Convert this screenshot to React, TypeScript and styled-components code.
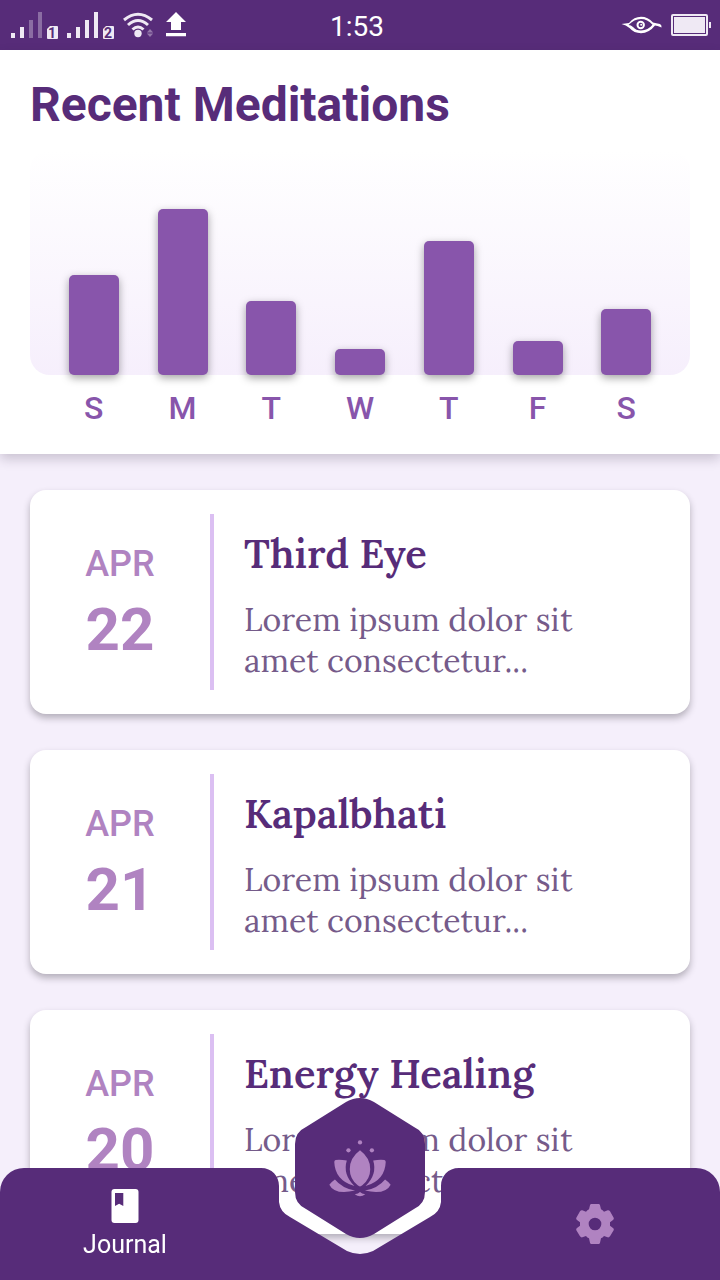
import React from "react";
import styled, { createGlobalStyle } from "styled-components";

const colors = {
  deep: "#572c79",
  bar: "#8855ab",
  orchid: "#b083c1",
  divider: "#dbbff2",
  body: "#755b8a",
  mist: "#f5effb",
};

const sans = `Roboto, "Liberation Sans", sans-serif`;
const serif = `Lora, "Liberation Serif", serif`;

const GlobalStyle = createGlobalStyle`
  *, *::before, *::after { box-sizing: border-box; }
  body { margin: 0; background: ${colors.mist}; font-family: ${sans}; }
  button { font: inherit; border: 0; margin: 0; padding: 0; background: none; cursor: pointer; }
  svg { display: block; }
`;

const Screen = styled.div`
  display: flex;
  flex-direction: column;
  height: 100vh;
  overflow: hidden;
  background: ${colors.mist};
`;

const StatusBar = styled.div`
  flex: none;
  display: grid;
  grid-template-columns: 1fr auto 1fr;
  align-items: center;
  height: 50px;
  padding: 0 9px 0 3px;
  background: ${colors.deep};
  color: #fff;
`;

const Clock = styled.time`
  font-size: 28px;
  line-height: 32px;
  padding-top: 3px;
`;

const StatusRight = styled.div`
  justify-self: end;
`;

const Header = styled.header`
  position: relative;
  z-index: 1;
  flex: none;
  padding: 27px 30px 25px;
  background: #fff;
  box-shadow: 0 5px 11px rgba(50, 35, 65, 0.22);
`;

const PageTitle = styled.h1`
  margin: 0 0 17px;
  font-size: 48px;
  line-height: 56px;
  font-weight: 700;
  color: ${colors.deep};
`;

const Plot = styled.div`
  display: flex;
  justify-content: space-evenly;
  align-items: flex-end;
  height: 225px;
  border-radius: 20px;
  background: linear-gradient(#fff, #f6effc);
`;

const Bar = styled.div<{ $minutes: number }>`
  width: 50px;
  height: ${(p) => p.$minutes * 2}px;
  border-radius: 5px;
  background: ${colors.bar};
  box-shadow: 0 3px 8px rgba(0, 0, 0, 0.36);
`;

const Days = styled.div`
  display: flex;
  justify-content: space-evenly;
  margin-top: 12px;
`;

const Day = styled.span`
  width: 50px;
  text-align: center;
  font-size: 32px;
  line-height: 42px;
  font-weight: 500;
  color: ${colors.bar};
`;

const Entries = styled.main`
  flex: 1;
  min-height: 0;
  overflow-y: auto;
  scrollbar-width: none;
  display: flex;
  flex-direction: column;
  gap: 36px;
  padding: 36px 30px 140px;
`;

const Card = styled.article`
  flex: none;
  display: flex;
  min-height: 224px;
  padding: 24px 0;
  border-radius: 16px;
  background: #fff;
  box-shadow: 0 4px 7px rgba(30, 25, 35, 0.3);
`;

const DateBlock = styled.div`
  flex: none;
  width: 180px;
  display: flex;
  flex-direction: column;
  align-items: center;
  justify-content: center;
  gap: 11px;
  color: ${colors.orchid};
`;

const Month = styled.span`
  font-size: 36px;
  line-height: 44px;
  font-weight: 500;
`;

const DayNumber = styled.span`
  font-size: 60px;
  line-height: 66px;
  font-weight: 700;
`;

const Details = styled.div`
  flex: 1;
  min-width: 0;
  padding: 14px 30px 0;
  border-left: 4px solid ${colors.divider};
  font-family: ${serif};
`;

const EntryTitle = styled.h2`
  margin: 0 0 20px;
  font-size: 40px;
  line-height: 51px;
  font-weight: 600;
  color: ${colors.deep};
`;

const Excerpt = styled.p`
  margin: 0;
  max-width: 370px;
  font-size: 32px;
  line-height: 41px;
  color: ${colors.body};
`;

const NavBar = styled.nav`
  position: fixed;
  z-index: 2;
  left: 0;
  right: 0;
  bottom: 0;
  display: flex;
  height: 112px;
`;

const Tab = styled.button<{ $side: "left" | "right" }>`
  flex: 1;
  display: flex;
  flex-direction: column;
  align-items: center;
  justify-content: center;
  gap: 6px;
  padding-top: ${(p) => (p.$side === "left" ? 2 : 0)}px;
  padding-right: ${(p) => (p.$side === "left" ? 10 : 0)}px;
  padding-left: ${(p) => (p.$side === "right" ? 10 : 0)}px;
  border-radius: ${(p) => (p.$side === "left" ? "24px 0 0 0" : "0 24px 0 0")};
  background: ${colors.deep};
  color: #fff;
  font-size: 25px;
  line-height: 32px;
`;

const Notch = styled.div`
  position: relative;
  flex: none;
  width: 200px;
`;

const MeditateButton = styled.button`
  position: absolute;
  left: 35px;
  top: -71px;
  width: 130px;
  height: 142px;
  display: grid;
  place-items: center;

  > svg {
    grid-area: 1 / 1;
  }
`;

const SignalIcons = () => (
  <svg width="190" height="50" viewBox="3 0 190 50" fill="#efe9f4" role="img" aria-label="Signal and Wi-Fi">
    <path d="M11 33h4v5h-4zM20 27h4v11h-4z" />
    <path d="M29 20h4v18h-4zM38 12h4v26h-4z" opacity=".35" />
    <path d="M50 26h7q1 0 1 1v11q0 1-1 1h-9q-1 0-1-1v-9z" />
    <path d="M67 33h4v5h-4zM76 27h4v11h-4zM85 20h4v18h-4zM94 12h4v26h-4z" />
    <path d="M106 26h7q1 0 1 1v11q0 1-1 1h-9q-1 0-1-1v-9z" />
    <g fill={colors.deep} fontSize="14" fontWeight="700" textAnchor="middle">
      <text x="52" y="38">1</text>
      <text x="108" y="38">2</text>
    </g>
    <g fill="none" stroke="#efe9f4" strokeWidth="3">
      <path d="M124 20Q138 8.500 152 20M128 25Q138 16 148 25M132.500 29.500Q138 24.500 143.500 29.500" />
    </g>
    <circle cx="138" cy="33.500" r="3.700" />
    <path d="M150 29l3.200 3.600h-6.400zM150 37l3.200-3.400h-6.400z" opacity=".4" />
    <path d="M176 12l10 10h-5v8h-10v-8h-5zM166 33h20v3.200h-20z" fill="#fff" />
  </svg>
);

const PowerIcons = () => (
  <svg width="91" height="50" viewBox="620 0 91 50" fill="none" role="img" aria-label="Eye comfort and battery">
    <path d="M621.500 24L629 23Q634 16.800 641 16.800Q648 16.800 653 22.500Q656 23 660 24Q662 25 661.500 27.500Q657 25.500 655 25.500Q649 33.200 641 33.200Q634 33.200 629.500 28Q626 25 621.500 24ZM628.500 25Q631 25 633 27Q636 30.500 641 30.500Q648 30.500 652.500 24.800Q647.500 19 641 19Q634 19 628.500 25Z" fill="#fff" fillRule="evenodd" />
    <circle cx="640.700" cy="25" r="3.200" stroke="#fff" strokeWidth="2" />
    <circle cx="641.200" cy="24.700" r="1" fill="#fff" />
    <rect x="672" y="15" width="35" height="20" rx="1" stroke="#efe9f4" strokeWidth="2" />
    <path d="M674 17h31v16h-31zM709 22h2v6h-2z" fill="#efe9f4" />
  </svg>
);

const NotchShape = () => (
  <svg width="200" height="112" viewBox="0 0 200 112" fill={colors.deep} aria-hidden="true">
    <path d="M0 0H1C12 0 19 8 19 18V34Q20 44 30 49L87 83Q100 89 113 83L170 49Q180 44 181 34V18C181 8 188 0 199 0H200V112H0Z" />
  </svg>
);

const Hexagon = () => (
  <svg width="130" height="142" viewBox="0 0 130 142" fill={colors.deep} aria-hidden="true">
    <path d="M51 5Q65 -3 79 5L119 30Q130 35 130 47V95Q130 107 119 112L79 137Q65 145 51 137L11 112Q0 107 0 95V47Q0 35 11 30Z" />
  </svg>
);

const Lotus = () => (
  <svg width="62" height="57" viewBox="266 178 188 172" fill={colors.orchid} aria-hidden="true">
    <circle cx="360" cy="185" r="6.500" />
    <circle cx="325" cy="209" r="6.500" />
    <circle cx="396" cy="209" r="6.500" />
    <path d="M360 209Q391 232 391 266Q391 295 367 315Q360 322 353 315Q329 295 329 266Q329 232 360 209Z" />
    <path d="M320 240Q301 236 286 238Q282 239 282 244Q284 300 343 317Q307 282 320 240Z" />
    <path d="M400 240Q419 236 434 238Q438 239 438 244Q436 300 377 317Q413 282 400 240Z" />
    <path d="M284 297Q275 303 267 313Q283 345 345 331Q305 323 284 297Z" />
    <path d="M436 297Q445 303 453 313Q437 345 375 331Q415 323 436 297Z" />
    <path d="M360 335Q365 341 376 342Q360 355 344 342Q355 341 360 335Z" />
  </svg>
);

const JournalIcon = () => (
  <svg width="28" height="34" viewBox="0 0 28 34" aria-hidden="true">
    <rect x=".500" width="27" height="34" rx="3" fill="#fff" />
    <path d="M4 4h8.300v13l-4.150-2.200L4 17z" fill={colors.deep} />
  </svg>
);

const GearIcon = () => (
  <svg width="40" height="40" viewBox="105 192 120 120" aria-hidden="true">
    <path
      fill={colors.orchid}
      fillRule="evenodd"
      d="M154 192H176Q179 192 180 196L183 208Q188 210 192 215L203 211Q207 210 210 214L221 233Q223 237 219 240L210 247V257L219 264Q223 267 221 271L210 289Q207 293 203 292L192 288Q188 293 183 295L180 308Q179 312 176 312H154Q151 312 150 308L147 295Q142 293 138 288L127 292Q123 293 120 289L109 271Q107 267 111 264L120 257V247L111 240Q107 237 109 233L120 214Q123 210 127 211L138 215Q142 210 147 208L150 196Q151 192 154 192ZM165 233A19 19 0 1 0 165 271A19 19 0 1 0 165 233Z"
    />
  </svg>
);

const week = [
  { day: "S", name: "Sunday", minutes: 50 },
  { day: "M", name: "Monday", minutes: 83 },
  { day: "T", name: "Tuesday", minutes: 37 },
  { day: "W", name: "Wednesday", minutes: 13 },
  { day: "T", name: "Thursday", minutes: 67 },
  { day: "F", name: "Friday", minutes: 17 },
  { day: "S", name: "Saturday", minutes: 33 },
];

const entries = [
  { month: "APR", day: "22", title: "Third Eye" },
  { month: "APR", day: "21", title: "Kapalbhati" },
  { month: "APR", day: "20", title: "Energy Healing" },
];

export default function App() {
  return (
    <Screen>
      <GlobalStyle />
      <StatusBar>
        <SignalIcons />
        <Clock>1:53</Clock>
        <StatusRight>
          <PowerIcons />
        </StatusRight>
      </StatusBar>
      <Header>
        <PageTitle>Recent Meditations</PageTitle>
        <Plot>
          {week.map((d) => (
            <Bar key={d.name} $minutes={d.minutes} />
          ))}
        </Plot>
        <Days>
          {week.map((d) => (
            <Day key={d.name}>{d.day}</Day>
          ))}
        </Days>
      </Header>
      <Entries>
        {entries.map((e) => (
          <Card key={e.day}>
            <DateBlock>
              <Month>{e.month}</Month>
              <DayNumber>{e.day}</DayNumber>
            </DateBlock>
            <Details>
              <EntryTitle>{e.title}</EntryTitle>
              <Excerpt>Lorem ipsum dolor sit amet consectetur...</Excerpt>
            </Details>
          </Card>
        ))}
      </Entries>
      <NavBar>
        <Tab type="button" $side="left">
          <JournalIcon />
          Journal
        </Tab>
        <Notch>
          <NotchShape />
          <MeditateButton type="button" aria-label="Meditate">
            <Hexagon />
            <Lotus />
          </MeditateButton>
        </Notch>
        <Tab type="button" $side="right" aria-label="Settings">
          <GearIcon />
        </Tab>
      </NavBar>
    </Screen>
  );
}
